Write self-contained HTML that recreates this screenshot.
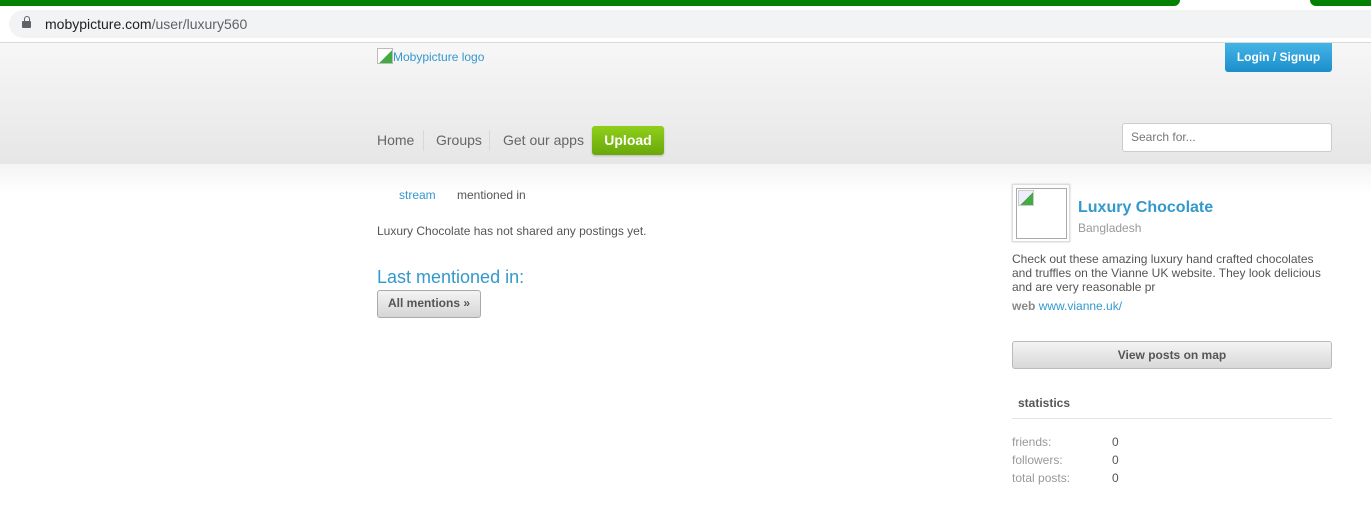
<!DOCTYPE html>
<html><head><meta charset="utf-8"><style>
body{margin:0;width:1371px;height:509px;overflow:hidden;background:#fff;font-family:"Liberation Sans",Arial,sans-serif;position:relative}
.a{position:absolute}
a{color:#3399cc;text-decoration:none}
</style></head><body>
<div class="a" style="left:0;top:0;width:1180px;height:6px;background:#028102;border-radius:0 0 8px 0"></div>
<div class="a" style="left:1310px;top:0;width:61px;height:6px;background:#028102;border-radius:0 0 0 8px"></div>
<div class="a" style="left:9px;top:10px;width:1362px;height:28px;background:#f1f3f4;border-radius:14px 0 0 14px"></div>
<div class="a" style="left:22px;top:16px;width:10px;height:12px">
<div class="a" style="left:2px;top:0;width:4px;height:5px;border:1.5px solid #5f6368;border-bottom:none;border-radius:3px 3px 0 0"></div>
<div class="a" style="left:0;top:5px;width:9px;height:7px;background:#5f6368;border-radius:1px"></div></div>
<div class="a" style="left:45px;top:16px;font-size:14px;color:#202124">mobypicture.com<span style="color:#5f6368">/user/luxury560</span></div>
<div class="a" style="left:0;top:42px;width:1371px;height:121px;background:linear-gradient(#f7f7f7,#e6e6e6);border-top:1px solid #d8d8d8;border-bottom:1px solid #dadada"></div>
<div class="a" style="left:377px;top:48px;font-size:12px;color:#3399cc"><span style="display:inline-block;width:14px;height:14px;border:1px solid #bbb;vertical-align:-3px;background:linear-gradient(135deg,#fff 55%,#4a4 55%)"></span>Mobypicture logo</div>
<div class="a" style="left:1225px;top:43px;width:107px;height:29px;background:linear-gradient(#45b3e6,#1b8fcc);border-radius:0 0 3px 3px;color:#fff;font-size:12px;font-weight:bold;text-align:center;line-height:28px">Login / Signup</div>
<div class="a" style="left:377px;top:132px;font-size:14px;color:#666">Home</div>
<div class="a" style="left:423px;top:130px;width:1px;height:21px;background:#d8d8d8"></div>
<div class="a" style="left:436px;top:132px;font-size:14px;color:#666">Groups</div>
<div class="a" style="left:489px;top:130px;width:1px;height:21px;background:#d8d8d8"></div>
<div class="a" style="left:503px;top:132px;font-size:14px;color:#666">Get our apps</div>
<div class="a" style="left:592px;top:126px;width:72px;height:29px;background:linear-gradient(#8fcf1a,#6aa80b);border-radius:3px;color:#fff;font-size:14px;font-weight:bold;text-align:center;line-height:29px;box-shadow:0 1px 2px rgba(0,0,0,.2)">Upload</div>
<div class="a" style="left:1122px;top:123px;width:208px;height:27px;background:#fff;border:1px solid #ccc;border-radius:3px"></div>
<div class="a" style="left:1131px;top:130px;font-size:12px;color:#777">Search for...</div>
<div class="a" style="left:0;top:164px;width:1371px;height:30px;background:linear-gradient(#f4f4f4,#fff)"></div>
<div class="a" style="left:399px;top:188px;font-size:12px"><a>stream</a></div>
<div class="a" style="left:457px;top:188px;font-size:12px;color:#555">mentioned in</div>
<div class="a" style="left:377px;top:224px;font-size:12px;color:#555">Luxury Chocolate has not shared any postings yet.</div>
<div class="a" style="left:377px;top:267px;font-size:18px;color:#3399cc">Last mentioned in:</div>
<div class="a" style="left:377px;top:290px;width:102px;height:26px;border:1px solid #aaa;border-radius:3px;background:linear-gradient(#f4f4f4,#d5d5d5);font-size:12px;font-weight:bold;color:#555;text-align:center;line-height:25px">All mentions »</div>
<div class="a" style="left:1012px;top:184px;width:56px;height:56px;border:1px solid #ddd;box-shadow:0 0 2px #ccc"></div>
<div class="a" style="left:1016px;top:188px;width:49px;height:49px;border:1px solid #aaa"></div>
<div class="a" style="left:1018px;top:190px;width:14px;height:14px;background:linear-gradient(135deg,#eef 55%,#4a4 55%);border:1px solid #ccc"></div>
<div class="a" style="left:1078px;top:199px;font-size:16px;font-weight:bold;color:#3399cc">Luxury Chocolate</div>
<div class="a" style="left:1078px;top:221px;font-size:12px;color:#999">Bangladesh</div>
<div class="a" style="left:1012px;top:252px;width:322px;font-size:12px;line-height:14px;color:#555">Check out these amazing luxury hand crafted chocolates and truffles on the Vianne UK website. They look delicious and are very reasonable pr</div>
<div class="a" style="left:1012px;top:299px;font-size:12px;color:#888"><b>web</b> <a>www.vianne.uk/</a></div>
<div class="a" style="left:1012px;top:341px;width:318px;height:26px;border:1px solid #bbb;border-radius:3px;background:linear-gradient(#f4f4f4,#d8d8d8);font-size:12px;font-weight:bold;color:#555;text-align:center;line-height:26px">View posts on map</div>
<div class="a" style="left:1018px;top:396px;font-size:12px;font-weight:bold;color:#555">statistics</div>
<div class="a" style="left:1012px;top:418px;width:320px;height:1px;background:#e3e3e3"></div>
<div class="a" style="left:1012px;top:433px;font-size:12px;line-height:18px;color:#999">friends:<br>followers:<br>total posts:</div>
<div class="a" style="left:1112px;top:433px;font-size:12px;line-height:18px;color:#555">0<br>0<br>0</div>
</body></html>
